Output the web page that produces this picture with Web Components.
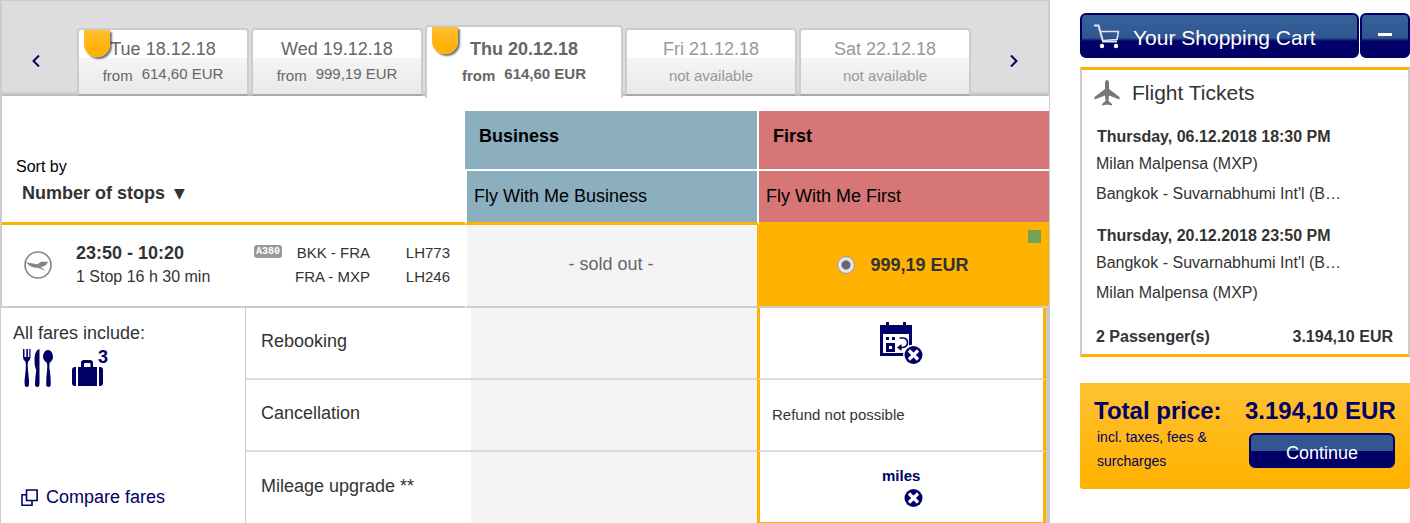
<!DOCTYPE html>
<html lang="en">
<head>
<meta charset="utf-8">
<title>Select your flight</title>
<style>
  body { margin: 0; background: #fff; color: #333; font-family: "Liberation Sans", Arial, sans-serif; font-size: 18px; line-height: 24px; }
</style>
</head>
<body>
<booking-page>
  <date-bar slot="main">
    <date-tab day="Tue 18.12.18" price="614,60 EUR" best></date-tab>
    <date-tab day="Wed 19.12.18" price="999,19 EUR"></date-tab>
    <date-tab day="Thu 20.12.18" price="614,60 EUR" best active></date-tab>
    <date-tab day="Fri 21.12.18"></date-tab>
    <date-tab day="Sat 22.12.18"></date-tab>
  </date-bar>
  <fare-table slot="main"></fare-table>
  <fare-details slot="main"></fare-details>
  <shopping-cart slot="side">
    <cart-leg when="Thursday, 06.12.2018 18:30 PM"><span slot="from">Milan Malpensa (MXP)</span><span slot="to">Bangkok - Suvarnabhumi Int'l (B…</span></cart-leg>
    <cart-leg when="Thursday, 20.12.2018 23:50 PM"><span slot="from">Bangkok - Suvarnabhumi Int'l (B…</span><span slot="to">Milan Malpensa (MXP)</span></cart-leg>
  </shopping-cart>
  <total-price slot="side"></total-price>
</booking-page>

<script>
const define = (name, render) => customElements.define(name, class extends HTMLElement {
  constructor() { super(); this.attachShadow({ mode: "open" }); }
  connectedCallback() { this.shadowRoot.innerHTML = render(this); }
});

define("booking-page", () => `
<style>
  :host { display: grid; grid-template-columns: minmax(0, 1fr) 330px; column-gap: 30px; align-items: start; }
  aside { padding-top: 13px; }
</style>
<main><slot name="main"></slot></main>
<aside><slot name="side"></slot></aside>`);

define("date-bar", () => `
<style>
  :host { display: grid; grid-template-columns: 75px minmax(0, 1fr) 77px; box-sizing: border-box; height: 96px;
    border: 1px solid #ccc; border-width: 1px 2px 0; background: linear-gradient(#ddd 90px, #b8b8b8 95px); position: relative; z-index: 1; }
  .tabs { display: flex; gap: 2px; align-items: flex-end; }
  button { border: 0; background: none; padding: 24px 30px 0; margin: 0; display: flex; align-items: center; }
  .next { justify-content: flex-end; }
  svg { display: block; }
</style>
<button aria-label="Earlier dates"><svg width="8" height="12" viewBox="0 0 8 12"><path d="M7 0.5 1.5 6 7 11.5" fill="none" stroke="#006" stroke-width="2"/></svg></button>
<div class="tabs" role="tablist"><slot></slot></div>
<button class="next" aria-label="Later dates"><svg width="8" height="12" viewBox="0 0 8 12"><path d="M1 0.5 6.5 6 1 11.5" fill="none" stroke="#006" stroke-width="2"/></svg></button>`);

define("date-tab", el => {
  const price = el.getAttribute("price");
  return `
<style>
  :host { display: block; position: relative; flex: 172 1 0; min-width: 0; }
  :host([active]) { flex-grow: 198; margin-bottom: -2px; }
  button { box-sizing: border-box; display: flex; flex-direction: column; align-items: center; gap: 5px; width: 100%; height: 68px; margin: 0;
    padding: 7px 0 0; border: 2px solid #ccc; border-bottom-color: #a8a8a8; border-radius: 4px 4px 0 0;
    background: linear-gradient(#fff 28px, #f5f5f5 28px, #e9e9e9); font: inherit; color: #666; white-space: nowrap; }
  button.off { color: #999; }
  :host([active]) button { height: 73px; padding-top: 10px; border-bottom: 0; background: #fff; font-weight: bold; }
  .line { display: flex; align-items: flex-end; gap: 9px; font-size: 15px; line-height: 20px; }
  .price { padding-bottom: 2px; margin-top: -2px; }
  .best { position: absolute; left: 7px; top: 2px; width: 26px; height: 27px; border-radius: 0 0 13px 13px;
    background: linear-gradient(#ffbf33, #ffb000 80%); box-shadow: 2px 2px 2px rgba(0,0,0,.55); }
</style>
<button role="tab" aria-selected="${el.hasAttribute("active")}" class="${price ? "" : "off"}"><span>${el.getAttribute("day")}</span>
<span class="line">${price ? `<span>from</span><span class="price">${price}</span>` : "<span>not available</span>"}</span></button>
${el.hasAttribute("best") ? `<div class="best"></div>` : ""}`;
});

define("crane-logo", () => `
<style>:host { display: block; } svg { display: block; }</style>
<svg width="28" height="28" viewBox="0 0 28 28"><circle cx="14" cy="14" r="13" fill="none" stroke="#858585" stroke-width="1.600"/>
<path d="M2 11.300c4 .8 7 1.200 11.500 1.900l3.500-2.400h7.500c-.8.400-.8 1-1.200 1.400-.8.600-.8 1.200-1.500 1.800-1 1.100-2.800 1.400-5.300 2.100l5.500 4-8.500-3.300c-5 .4-9.500-2.500-11.500-5.500z" fill="#858585"/></svg>`);

define("fare-table", () => `
<style>
  :host { display: block; border: solid #ccc; border-width: 0 1px 0 2px; padding-top: 15px; }
  table { width: 100%; table-layout: fixed; border-spacing: 0; }
  col.business { width: 294px; } col.first { width: 290px; }
  th, td { box-sizing: border-box; padding: 0; text-align: left; vertical-align: top; }
  thead th { color: #000; padding: 13px 7px 0; }
  label { display: block; font-size: 16px; margin-bottom: 2px; }
  .pick { display: flex; align-items: center; gap: 8px; padding-left: 6px; color: #333; }
  .pick span { font: 14px/24px "DejaVu Sans", sans-serif; }
  select { appearance: none; border: 0; background: none; padding: 0; margin: 0; height: 24px; font: bold 18px/24px "Liberation Sans", sans-serif; color: #333; }
  .cabin th { height: 60px; padding-left: 14px; border-bottom: 2px solid #fff; }
  .cabin th.sort { height: 114px; vertical-align: bottom; padding: 0 0 17px 14px; font-weight: normal; border-bottom: 3px solid #ffb200; }
  .b { background: #8cafbf; background-clip: padding-box; border-right: 2px solid #fff; }
  .f { background: #d77676; }
  .brand th { height: 54px; font-weight: normal; border-bottom: 3px solid #ffb200; }
  .brand .b { border-left: 2px solid #fff; }
  td { height: 83px; border-bottom: 2px solid #ccc; vertical-align: middle; padding-bottom: 2px; }
  .trip { display: flex; align-items: center; gap: 24px; padding: 0 15px 0 22px; }
  .time { flex: 1; white-space: nowrap; } .time b { display: block; } .time span { font-size: 16px; display: block; }
  .legs { display: grid; grid-template-columns: 28px 88px 80px; align-items: center; font-size: 15px; text-align: right; }
  .a380 { height: 13px; border-radius: 3px; background: #999; color: #fff; font: bold 10px/13px "Liberation Mono", monospace; text-align: center; margin-bottom: 2px; }
  .out { text-align: center; background: #f4f4f4; border-left: 2px solid #fff; border-right: 2px solid #ffb200; color: #666; padding: 0 2px 4px 0; }
  .sel { background: #ffb200; position: relative; padding-right: 2px; }
  .sel label { display: flex; align-items: center; justify-content: center; gap: 15px; margin: 0; font-size: 18px; font-weight: bold; }
  input { appearance: none; box-sizing: border-box; width: 18px; height: 18px; margin: 0; border: 1px solid #999; border-radius: 50%;
    background: radial-gradient(circle, #666 4px, #e4e4e4 5px); }
  .tag { position: absolute; top: 5px; right: 8px; width: 13px; height: 13px; background: #72a253; }
</style>
<table>
<colgroup><col><col class="business"><col class="first"></colgroup>
<thead>
<tr class="cabin"><th rowspan="2" class="sort"><label for="sort">Sort by</label><div class="pick"><select id="sort"><option>Number of stops</option></select><span aria-hidden="true">▼</span></div></th><th class="b">Business</th><th class="f">First</th></tr>
<tr class="brand"><th class="b">Fly With Me Business</th><th class="f">Fly With Me First</th></tr>
</thead>
<tbody><tr>
<td><div class="trip"><crane-logo></crane-logo><div class="time"><b>23:50 - 10:20</b><span>1 Stop 16 h 30 min</span></div>
<div class="legs"><span class="a380">A380</span><span>BKK - FRA</span><span>LH773</span><span></span><span>FRA - MXP</span><span>LH246</span></div></div></td>
<td class="out">- sold out -</td>
<td class="sel"><label><input type="radio" name="fare" checked>999,19 EUR</label><div class="tag"></div></td>
</tr></tbody>
</table>`);

const cross = (x, y) => `<circle cx="${x}" cy="${y}" r="10.500" fill="#fff"/><circle cx="${x}" cy="${y}" r="9" fill="#006"/><path d="M${x - 4.5} ${y - 4.5}l9 9m0-9l-9 9" stroke="#fff" stroke-width="3.200" fill="none"/>`;

define("fare-details", () => `
<style>
  :host { display: grid; grid-template-columns: 246px minmax(0, 1fr); border-right: 4px solid #c8c8c8; }
  .info { box-sizing: border-box; display: flex; flex-direction: column; border: solid #ccc; border-width: 0 1px; padding: 13px 12px 14px; }
  .icons { display: flex; gap: 18px; padding: 4px 9px 0; }
  svg { display: block; }
  .bag { display: flex; }
  .bag svg { margin-top: 11px; }
  .bag b { color: #006; margin-left: -5px; line-height: 16px; }
  a { display: flex; align-items: center; gap: 8px; margin-top: auto; padding-left: 8px; color: #006; text-decoration: none; }
  table { width: 100%; table-layout: fixed; border-spacing: 0; }
  col.business { width: 286px; } col.first { width: 289px; }
  th, td { box-sizing: border-box; height: 72px; padding: 0; border-bottom: 2px solid #dcdcdc; text-align: left; font-weight: normal; }
  tr:last-child > * { height: 71px; border-bottom-width: 0; }
  th { padding: 0 0 4px 15px; }
  .b { background: #f4f4f4; }
  .f { border-left: 3px solid #ffb200; border-right: 3px solid #ffb200; padding-left: 12px; font-size: 15px; }
  tr:last-child .f { border-bottom: 1px solid #ffb200; }
  .cal, .miles { padding-left: 120px; }
  .miles b { display: block; color: #006; line-height: 20px; padding-left: 2px; }
</style>
<section class="info"><div>All fares include:</div>
<div class="icons">
<svg width="32" height="38" viewBox="0 0 32 38" fill="#006"><path d="M1 0v8q0 3 2.500 4.500.7 3 .2 8T2.600 31v4q0 3 2.200 3T7 35v-4q-.6-6-1.100-10.500t.2-8Q8.500 11 8.500 8V0H7.300v8H5.900V0H4.300v8H2.500V0z"/><path d="M17.500 0v35q0 3-2.300 3T13 35q.1-7 1.200-13.500Q12 16 12.500 9q.5-8 5-9z"/><path d="M26 1c3 0 5 3.500 5 7 0 2.800-2 4.800-3.300 5.700-.7 3-.3 6 .2 8.300q.9 6 .9 13 0 3-2.300 3t-2.300-3q0-7 .8-13c.4-3 .4-6-.2-8.300C23 12.500 21 10.500 21 8c0-3.500 2-7 5-7z"/></svg>
<div class="bag"><svg width="31" height="26" viewBox="0 0 31 26" fill="#006"><path d="M4 7v19H3q-3 0-3-3V10q0-3 3-3zM27 7h1q3 0 3 3v13q0 3-3 3h-1zM6 7h3V3q0-3 3-3h6q3 0 3 3v4h4v19H6zM12 7h6.500V4q0-1-1-1H13q-1 0-1 1z"/></svg><b>3</b></div>
</div>
<a href="#compare"><svg width="17" height="17" viewBox="0 0 17 17" fill="none" stroke="#006" stroke-width="1.600"><path d="M5 5.800H1v10.400h10V12"/><path d="M5.500 1h10.600v10.500H5.500z"/></svg>Compare fares</a></section>
<table>
<colgroup><col><col class="business"><col class="first"></colgroup>
<tr><th scope="row">Rebooking</th><td class="b"></td><td class="f cal"><svg width="44" height="42" viewBox="0 0 44 42" role="img" aria-label="Rebooking not possible"><path d="M0 3h6V0h3v3h14V0h3v3h6v31H0zm3 9v19h26V12z" fill="#006" fill-rule="evenodd"/><path d="M6 15h3v3H6zm6 0h3v3h-3zM6 21h9v9H6zm3 3v3h3v-3z" fill="#006" fill-rule="evenodd"/><path d="M19.500 16h3q5 0 5 4.500t-5 5h-2" fill="none" stroke="#006" stroke-width="1.700"/><path d="M17 25.500l4.500-3.500v7z" fill="#006"/>${cross(33.5, 33)}</svg></td></tr>
<tr><th scope="row">Cancellation</th><td class="b"></td><td class="f">Refund not possible</td></tr>
<tr><th scope="row">Mileage upgrade **</th><td class="b"></td><td class="f miles"><b>miles</b><svg width="44" height="23" viewBox="0 0 44 23" role="img" aria-label="No mileage upgrade">${cross(33.5, 12)}</svg></td></tr>
</table>`);

define("shopping-cart", () => `
<style>
  :host { display: block; }
  header { display: flex; gap: 1px; }
  button, h2 { box-sizing: border-box; height: 45px; margin: 0; border: 2px solid #006; border-radius: 6px; color: #fff;
    background: linear-gradient(#35629c, #31568f 23px, #006 26px); }
  h2 { flex: 1; display: flex; align-items: center; gap: 13px; padding: 5px 12px 0; font-size: 21px; font-weight: normal; }
  h2 svg { margin-bottom: 4px; }
  button { width: 50px; padding: 0; display: flex; align-items: center; justify-content: center; }
  button i { width: 14px; height: 3px; background: #fff; margin-bottom: 2px; }
  svg { display: block; }
  .panel { margin-top: 9px; border: 2px solid #ccc; border-top: 3px solid #ffb200; border-bottom: 3px solid #ffb200; padding: 9px 15px 5px 14px; }
  h3 { display: flex; align-items: center; gap: 12px; margin: 0 0 18px -2px; font-size: 21px; font-weight: normal; line-height: 28px; }
  .sum { display: flex; justify-content: space-between; padding-top: 2px; font-size: 16px; font-weight: bold; }
</style>
<header><h2><svg width="26" height="25" viewBox="0 0 26 25" fill="none" stroke="#dfe3f3" stroke-width="2"><path d="M0 1.500h4.500L9 17.500h14"/><path d="M6 7.500h18.500l-1.500 8-14.500 1" stroke-width="1.600"/><circle cx="8" cy="22" r="2.200" fill="#fff" stroke="none"/><circle cx="22" cy="22" r="2.200" fill="#fff" stroke="none"/></svg>Your Shopping Cart</h2>
<button aria-label="Collapse cart"><i></i></button></header>
<section class="panel"><h3><svg width="26" height="26" viewBox="0 0 26 26" fill="#777"><path d="M13 0c1.200 0 2 1.200 2 3v6l10.500 8v2.500L15 15.500 14.500 21l3.500 3v1.500l-5-1-5 1V24l3.500-3-.5-5.500L.5 19.500V17L11 9V3c0-1.800.8-3 2-3z"/></svg>Flight Tickets</h3>
<slot></slot>
<div class="sum"><span>2 Passenger(s)</span><span>3.194,10 EUR</span></div></section>`);

define("cart-leg", el => `
<style>
  :host { display: block; font-size: 16px; line-height: 30px; padding-bottom: 15px; white-space: nowrap; }
  b { display: block; line-height: 24px; padding-left: 1px; }
  ::slotted(span) { display: block; }
</style>
<b>${el.getAttribute("when")}</b><slot name="from"></slot><slot name="to"></slot>`);

define("total-price", () => `
<style>
  :host { display: grid; grid-template-columns: minmax(0, 1fr) 151px; column-gap: 8px; align-content: start; margin-top: 26px; box-sizing: border-box; height: 106px; padding: 16px 14px 0;
    border-radius: 0 0 3px 3px; background: linear-gradient(#ffc235, #ffb200 90%); color: #006; }
  b { font-size: 24px; white-space: nowrap; } 
  small { font-size: 14px; padding: 2px 30px 0 3px; }
  button { box-sizing: border-box; width: 146px; height: 35px; margin: 10px 1px 0 4px; padding: 4px 0 0; border: 2px solid #006; border-radius: 6px;
    background: linear-gradient(#335592 16px, #006 16px); color: #fff; font: 18px/24px "Liberation Sans", sans-serif; }
</style>
<b>Total price:</b><b>3.194,10 EUR</b>
<small>incl. taxes, fees &amp; surcharges</small><button>Continue</button>`);
</script>
</body>
</html>
